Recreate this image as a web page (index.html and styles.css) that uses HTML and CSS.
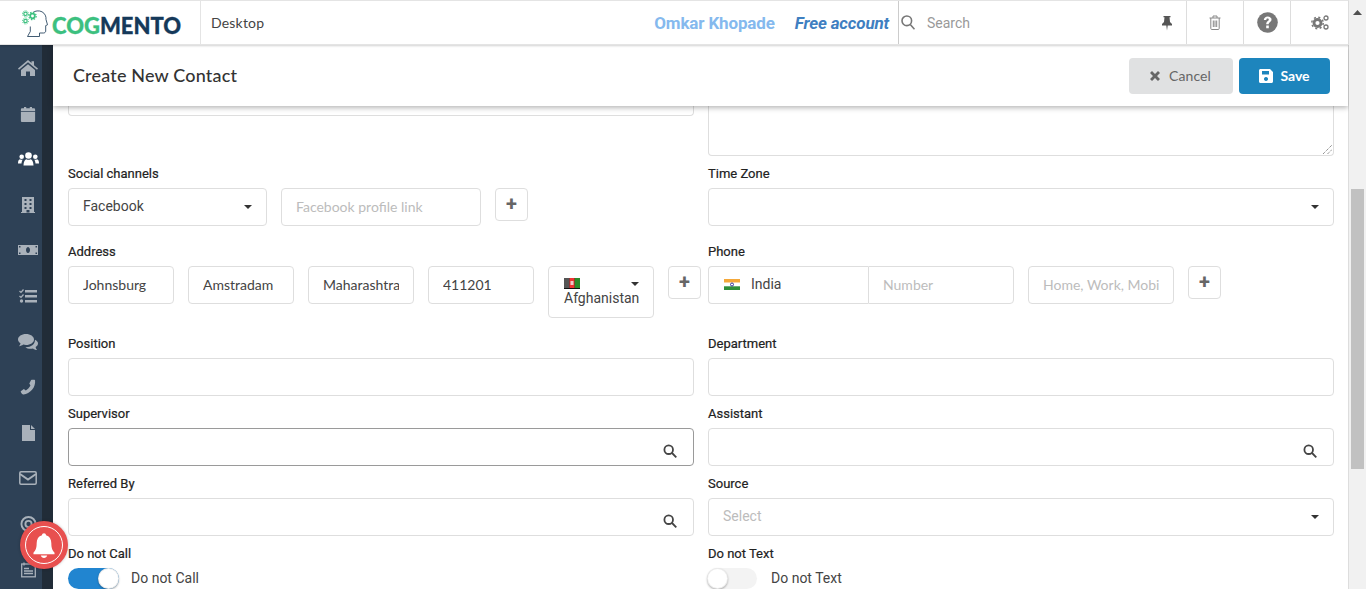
FILE: index.html
```html
<!DOCTYPE html>
<html lang="en">
<head>
<meta charset="utf-8">
<title>Create New Contact</title>
<link rel="stylesheet" href="styles.css">
</head>
<body>
<div class="page">
  <header class="topbar">
    <div class="brand">
      <svg class="brand-head" width="26" height="27" viewBox="0 0 26 27" fill="none"><path d="M11 2.500C13 .8 17 .2 20 1.800c3 1.600 4.300 4.700 4 7.700l1.500 5.300-1.800.8v5.400c0 1.200-1 2-2.200 2h-4v3.500H5.500l2.800-5v-5" stroke="#2d4a63" stroke-width=".9"/><circle cx="10.500" cy="6" r="2.300" stroke="#3cc07f" stroke-width="1.700"/><circle cx="10.500" cy="6" r="3.700" stroke="#3cc07f" stroke-width="1.200" stroke-dasharray="1.500 1.400"/><circle cx="3.500" cy="3.800" r="1.700" stroke="#3cc07f" stroke-width="1.200"/><circle cx="3.500" cy="3.800" r="3" stroke="#3cc07f" stroke-width=".9" stroke-dasharray="1.200 1.100"/><circle cx="3.500" cy="11" r="1.700" stroke="#3cc07f" stroke-width="1.200"/><circle cx="3.500" cy="11" r="3" stroke="#3cc07f" stroke-width=".9" stroke-dasharray="1.200 1.100"/></svg>
      <span class="brand-name"><span class="brand-green">COG</span><span class="brand-navy">MENTO</span></span>
    </div>
    <div class="crumb">Desktop</div>
    <div class="account"><span class="account-name">Omkar Khopade</span><span class="account-plan">Free account</span></div>
    <div class="search">
      <svg width="14" height="15" viewBox="0 0 14 15" fill="none" stroke="#777" stroke-width="1.600"><circle cx="5.800" cy="5.800" r="4.800"/><path d="M9.300 9.500l4.200 4.800"/></svg>
      <span class="search-text">Search</span>
      <svg class="pin" width="12" height="16" viewBox="0 0 12 16" fill="#555"><path d="M2.500 1h7v1.300H8.500L9 7l2 2v1.500H6.700L6 15.500l-.7-5H1V9l2-2 .5-4.700h-1z"/></svg>
    </div>
    <div class="tool tool-trash"><svg width="12" height="15" viewBox="0 0 12 15" fill="none" stroke="#888"><path d="M.5 3h11M4 3V1h4v2M1.800 3v10.500c0 .6.400 1 1 1h6.400c.6 0 1-.4 1-1V3M4.300 5.500v6.500M6 5.500v6.500M7.700 5.500v6.500"/></svg></div>
    <div class="tool tool-help"><svg width="21" height="21" viewBox="0 0 21 21"><circle cx="10.500" cy="10.500" r="10.300" fill="#777"/><path d="M6.800 8c.2-2.300 1.800-3.600 3.900-3.600 2.200 0 3.800 1.300 3.800 3.200 0 2.600-2.800 2.600-2.800 4.600H9.200c0-3.100 2.600-3.100 2.600-4.500 0-.7-.5-1.200-1.200-1.200-.8 0-1.200.5-1.300 1.400zM9.200 13.500h2.600v2.700H9.200z" fill="#fff"/></svg></div>
    <div class="tool tool-gears"><svg width="18" height="15" viewBox="0 0 18 15"><circle cx="6.500" cy="8" r="3.500" fill="none" stroke="#777" stroke-width="2.800"/><circle cx="6.500" cy="8" r="5.700" fill="none" stroke="#777" stroke-width="1.500" stroke-dasharray="2 2.500"/><circle cx="15" cy="3" r="2" fill="none" stroke="#777" stroke-width="1.300"/><circle cx="15" cy="12" r="2" fill="none" stroke="#777" stroke-width="1.300"/></svg></div>
  </header>

  <div class="body-row">
    <nav class="side">
      <div class="side-icons">
        <svg width="20" height="16" viewBox="0 0 20 16"><path d="M10 0l3.500 3V1.200H16v4L20 8.600l-1 1.100L10 2.200 1 9.700 0 8.600z"/><path d="M3 10l7-5.800L17 10v6h-5v-4.500H8V16H3z"/></svg>
        <svg width="16" height="18" viewBox="0 0 16 18"><path d="M0 6.500h16v10c0 .8-.6 1.500-1.500 1.500h-13C.6 18 0 17.300 0 16.500zM1.500 2.500H3.500V1h2.500v1.500h4V1h2.500v1.500h2c.8 0 1.500.6 1.500 1.500v1.500H0V4c0-.9.600-1.500 1.500-1.500z"/></svg>
        <svg class="active" width="21" height="14" viewBox="0 0 21 14"><circle cx="10.500" cy="3.500" r="3.300"/><circle cx="3.700" cy="4.800" r="2.300"/><circle cx="17.300" cy="4.800" r="2.300"/><path d="M5.500 13.500c0-3.800 1.500-6 3-6.300.9.700 3.100.7 4 0 1.500.3 3 2.500 3 6.300zM0 11.500c0-2.500.6-4 2-4.200.8.600 2 .6 2.800.3-.7 1-1.200 2.200-1.300 3.900zM21 11.500c0-2.500-.6-4-2-4.200-.8.600-2 .6-2.800.3.700 1 1.200 2.200 1.300 3.900z"/></svg>
        <svg width="14" height="16" viewBox="0 0 14 16"><path fill-rule="evenodd" d="M1 0h12v15h1v1H0v-1h1zM3.500 2v2h2V2zm5 0v2h2V2zM3.500 6v2h2V6zm5 0v2h2V6zM3.500 10v2h2v-2zm5 0v2h2v-2zM5.500 13v2.500h3V13z"/></svg>
        <svg width="20" height="10" viewBox="0 0 20 10"><path fill-rule="evenodd" d="M0 0h20v10H0zM10 2a2 3 0 1 0 .01 0zM1 1v1.500h1.500V1zm16.500 0v1.500H19V1zM1 7.500V9h1.500V7.500zm16.500 0V9H19V7.500z"/></svg>
        <svg width="18" height="14" viewBox="0 0 18 14"><path d="M6 1h12v2.400H6zM6 6h12v2.400H6zM6 11h12v2.400H6z"/><circle cx="2.500" cy="12" r="1.700"/><path class="line-art" d="M.5 2l1.500 1.400L4.500.5M.5 7l1.500 1.400 2.500-2.900"/></svg>
        <svg width="20" height="16" viewBox="0 0 20 16"><path d="M8 0c4.400 0 8 2.400 8 5.500S12.400 11 8 11c-1 0-2-.1-2.800-.4C4 11.600 2.600 12 1 12.200c.9-1 1.400-2 1.500-3C.9 8.200 0 6.900 0 5.500 0 2.400 3.600 0 8 0z"/><path d="M17 5.800c1.900.9 3 2.200 3 3.700 0 1.400-.9 2.600-2.400 3.500.1 1 .6 2 1.400 3-1.500-.2-2.900-.6-4-1.600-.8.200-1.600.3-2.500.3-2 0-3.900-.5-5.100-1.500 5.100.3 9.500-2.500 9.600-7.400z"/></svg>
        <svg width="16" height="17" viewBox="0 0 16 17"><path d="M15.500 1.200c.4 3.600-.7 7.300-3.200 10.200-2.500 2.900-5.600 4.800-9 5.100-.5 0-1.400-.5-2-1.200-.7-.9-1.100-1.800-1-2.300l3.300-2.300 2.100 1.500c1.800-.9 3.700-3 4.900-5.200L9.400 4.700 11.300 1.100c.6-.2 1.600-.3 2.500-.2.700 0 1.500.1 1.700.3z"/></svg>
        <svg width="13" height="16" viewBox="0 0 13 16"><path d="M0 0h8v5h5v11H0zM9 0l4 4H9z"/></svg>
        <svg class="outline" width="18" height="14" viewBox="0 0 18 14"><rect x=".8" y=".8" width="16.400" height="12.400" rx="1.200" stroke-width="1.500"/><path d="M1 3l8 5.500L17 3" stroke-width="2"/></svg>
        <svg class="outline" width="17" height="17" viewBox="0 0 17 17" stroke-width="2"><circle cx="8.500" cy="8.500" r="7.500"/><circle cx="8.500" cy="8.500" r="3.300"/></svg>
        <svg class="outline" width="15" height="15" viewBox="0 0 15 15" stroke-width="1.300"><rect x=".7" y="1.500" width="13.600" height="12.800"/><path d="M3 0v3M12 0v3M3 6h5M3 8.500h9M3 11h9"/></svg>
      </div>
      <div class="side-strip"></div>
    </nav>

    <main class="content">
      <div class="titlebar">
        <h1 class="title">Create New Contact</h1>
        <div class="actions">
          <button class="btn btn-cancel"><svg width="10" height="10" viewBox="0 0 10 10"><path d="M2 0l3 3 3-3 2 2-3 3 3 3-2 2-3-3-3 3-2-2 3-3-3-3z" fill="#666"/></svg>Cancel</button>
          <button class="btn btn-save"><svg width="14" height="14" viewBox="0 0 14 14"><path fill-rule="evenodd" d="M1.500 0H11l3 3v9.500c0 .8-.7 1.500-1.500 1.500h-11C.7 14 0 13.300 0 12.500v-11C0 .7.700 0 1.500 0zM3 2v3.500h7V2zm4 6a2 2 0 1 0 .01 0z" fill="#fff"/></svg>Save</button>
        </div>
      </div>

      <div class="form">
        <div class="grid row-clip">
          <div class="box clip-short"></div>
          <div class="box clip-tall"><svg class="resize" width="11" height="11" viewBox="0 0 11 11" fill="none" stroke="#666"><path d="M1 10L10 1M5.500 10L10 5.500" stroke-dasharray="1 1"/></svg></div>
        </div>

        <div class="grid row-wide">
          <div>
            <label class="label">Social channels</label>
            <div class="line">
              <div class="box field select w-199"><span class="val">Facebook</span><i class="caret"></i></div>
              <div class="box field placeholder w-200"><span class="val text-input">Facebook profile link</span></div>
              <div class="box plus">+</div>
            </div>
          </div>
          <div>
            <label class="label">Time Zone</label>
            <div class="box field select"><i class="caret"></i></div>
          </div>
        </div>

        <div class="grid row-wide">
          <div>
            <label class="label">Address</label>
            <div class="line">
              <div class="box field w-106"><span class="val text-input">Johnsburg</span></div>
              <div class="box field w-106"><span class="val text-input">Amstradam</span></div>
              <div class="box field w-106"><span class="val text-input">Maharashtra</span></div>
              <div class="box field w-106"><span class="val text-input">411201</span></div>
              <div class="box country">
                <svg class="flag" width="16" height="11" viewBox="0 0 16 11"><rect width="16" height="11" fill="#111"/><rect x="5.300" width="5.400" height="11" fill="#e33"/><rect x="10.700" width="5.300" height="11" fill="#2a8a2a"/><rect x="0" width="5.300" height="11" fill="#555"/><rect x="6.500" y="3" width="3" height="4" fill="#eee" opacity=".8"/><rect y="10" width="16" height="1" fill="#111"/></svg>
                <span>Afghanistan</span><i class="caret"></i>
              </div>
              <div class="box plus">+</div>
            </div>
          </div>
          <div>
            <label class="label">Phone</label>
            <div class="line">
              <div class="phone-group">
                <div class="box phone-country">
                  <svg width="16" height="11" viewBox="0 0 16 11"><rect width="16" height="3.700" fill="#f4a83a"/><rect y="3.700" width="16" height="3.600" fill="#fff"/><rect y="7.300" width="16" height="3.700" fill="#2f8f3a"/><circle cx="8" cy="5.500" r="1.500" fill="none" stroke="#339"/></svg>
                  India
                </div>
                <div class="box field placeholder phone-number"><span class="val text-input">Number</span></div>
              </div>
              <div class="box field placeholder w-146"><span class="val text-input">Home, Work, Mobile</span></div>
              <div class="box plus">+</div>
            </div>
          </div>
        </div>

        <div class="grid row-tight">
          <div><label class="label">Position</label><div class="box field"></div></div>
          <div><label class="label">Department</label><div class="box field"></div></div>
        </div>

        <div class="grid row-tight">
          <div><label class="label">Supervisor</label><div class="box field focus select"><svg class="lens" width="14" height="14" viewBox="0 0 14 14" fill="none" stroke="#444" stroke-width="1.800"><circle cx="5.700" cy="5.700" r="4.300"/><path d="M9 9l4.300 4.300"/></svg></div></div>
          <div><label class="label">Assistant</label><div class="box field select"><svg class="lens" width="14" height="14" viewBox="0 0 14 14" fill="none" stroke="#444" stroke-width="1.800"><circle cx="5.700" cy="5.700" r="4.300"/><path d="M9 9l4.300 4.300"/></svg></div></div>
        </div>

        <div class="grid row-tight">
          <div><label class="label">Referred By</label><div class="box field select"><svg class="lens" width="14" height="14" viewBox="0 0 14 14" fill="none" stroke="#444" stroke-width="1.800"><circle cx="5.700" cy="5.700" r="4.300"/><path d="M9 9l4.300 4.300"/></svg></div></div>
          <div><label class="label">Source</label><div class="box field select placeholder"><span class="val">Select</span><i class="caret"></i></div></div>
        </div>

        <div class="grid row-tight">
          <div><label class="label">Do not Call</label><div class="toggle-line"><span class="toggle on"></span>Do not Call</div></div>
          <div><label class="label">Do not Text</label><div class="toggle-line"><span class="toggle"></span>Do not Text</div></div>
        </div>
      </div>
    </main>

    <aside class="scrollbar">
      <svg class="arrow" width="9" height="5" viewBox="0 0 9 5"><path d="M4.500 0L9 5H0z" fill="#505050"/></svg>
      <div class="thumb"></div>
    </aside>
  </div>

  <div class="bell"><div class="bell-ring"><svg width="24" height="27" viewBox="0 0 24 27" fill="#fff"><path d="M12 0c1.300 0 2.200 1 2.200 2.300C18 3.400 20 6.500 20 11c0 5.500 1.200 7.700 3.500 10.300V23H.5v-1.700C2.800 18.700 4 16.500 4 11c0-4.500 2-7.600 5.800-8.700C9.800 1 10.700 0 12 0z"/><path d="M8.500 24.300h7C15 26 13.700 27 12 27s-3-1-3.500-2.700z"/></svg></div></div>
</div>
</body>
</html>
```

FILE: styles.css
```css
* { box-sizing: border-box; }
html, body { margin: 0; height: 100%; overflow: hidden; }
body { font-family: "Roboto", sans-serif; font-size: 14px; color: #333; background: #fff; }
.page { position: relative; display: flex; flex-direction: column; height: 589px; width: 1366px; }

.topbar { display: flex; align-items: stretch; height: 45px; width: 1349px; border: 1px solid #e4e4e4; border-left: 0; border-right: 1px solid #ddd; background: #fff; box-shadow: 0 1px 2px rgba(0,0,0,.18); position: relative; z-index: 3; }
.brand { width: 201px; display: flex; align-items: center; padding-left: 22px; border-right: 1px solid #e4e4e4; }
.brand-head { flex: none; margin-top: 1px; }
.brand-name { font-family: "Lato", sans-serif; font-weight: 900; font-size: 22px; margin-left: 4px; margin-top: 5px; -webkit-text-stroke: .3px; }
.brand-green { color: #3cc07f; }
.brand-navy { color: #15395a; }
.crumb { width: 150px; padding-left: 10px; font-family: "Lato", sans-serif; font-size: 14px; line-height: 44px; color: #444; letter-spacing: .2px; }
.account { flex: 1; display: flex; justify-content: flex-end; align-items: center; gap: 20px; padding-right: 9px; font-weight: 700; font-size: 17px; letter-spacing: -.15px; }
.account-name { color: #85b9ee; }
.account-plan { color: #3f7fc1; font-style: italic; }
.search { width: 288px; display: flex; align-items: center; padding-left: 2px; border-left: 1px solid #ccc; color: #999; font-size: 14px; }
.search-text { margin-left: 12px; flex: 1; }
.pin { margin-right: 13px; }
.tool { display: flex; align-items: center; justify-content: center; border-left: 1px solid #ddd; }
.tool-trash { width: 57px; }
.tool-help { width: 47px; }
.tool-gears { width: 58px; }

.body-row { flex: 1; display: flex; min-height: 0; }
.side { width: 53px; flex: none; display: flex; background: #2e4156; }
.side-icons { width: 42px; padding: 15px 0 0 14px; display: flex; flex-direction: column; align-items: center; color: #a9b1ba; }
.side-icons svg { fill: currentColor; height: 16px; margin-bottom: 29.600px; flex: none; overflow: visible; }
.side-icons svg.active { color: #fff; }
.side-icons svg.outline { fill: none; stroke: currentColor; }
.side-icons .line-art { fill: none; stroke: currentColor; stroke-width: 1.300; }
.side-strip { width: 11px; background: #212c38; }

.content { flex: 1; min-width: 0; display: flex; flex-direction: column; background: #fff; border-right: 1px solid #ddd; }
.titlebar { height: 61px; flex: none; display: flex; align-items: center; justify-content: space-between; padding: 0 20px 2px 20px; background: #fff; box-shadow: 0 2px 5px rgba(0,0,0,.28); position: relative; z-index: 2; }
.title { margin: 0; font-family: "Lato", sans-serif; font-size: 18px; font-weight: 500; color: #333; letter-spacing: .17px; }
.actions { display: flex; gap: 6px; margin: 2px -2px 0 0; }
.btn { height: 36px; border: 0; border-radius: 4px; display: flex; align-items: center; justify-content: center; font-family: "Lato", sans-serif; font-size: 14px; gap: 7px; }
.btn-cancel { width: 104px; background: #e0e1e2; color: #666; gap: 9px; padding-right: 7px; letter-spacing: .1px; }
.btn-save { width: 91px; background: #1d85bd; color: #fff; font-weight: 700; }

.form { flex: 1; min-height: 0; overflow: hidden; padding: 0 15px; }
.grid { display: grid; grid-template-columns: 626px 626px; column-gap: 14px; align-items: start; }
.row-clip { height: 50px; margin-bottom: 10px; }
.row-wide { margin-bottom: 18px; }
.row-tight { margin-bottom: 10px; }
.label { display: block; height: 15px; margin-bottom: 7px; font-size: 13px; line-height: 15px; font-weight: 400; color: #222; -webkit-text-stroke: .2px #222; }
.box { border: 1px solid #dedede; border-radius: 4px; background: #fff; }
.clip-short { height: 10px; border-top: 0; border-radius: 0 0 4px 4px; }
.clip-tall { height: 50px; border-top: 0; border-radius: 0 0 4px 4px; position: relative; }
.resize { position: absolute; right: 0; bottom: 0; }
.line { display: flex; gap: 14px; align-items: flex-start; }
.field { height: 38px; position: relative; padding: 0 14px; line-height: 36px; font-size: 14px; color: #444; white-space: nowrap; flex: none; }
.val { display: block; overflow: hidden; }
.text-input { font-family: "Lato", sans-serif; }
.select .val { line-height: 34px; }
.placeholder { color: #bcbcbc; }
.focus { border-color: #9a9a9a; }
.w-199 { width: 199px; }
.w-200 { width: 200px; }
.w-106 { width: 106px; }
.w-146 { width: 146px; }
.caret { position: absolute; right: 14px; top: 16px; width: 0; height: 0; border: 4px solid transparent; border-top: 4px solid #333; border-bottom: 0; }
.plus { width: 33px; height: 33px; flex: none; display: flex; align-items: center; justify-content: center; padding-bottom: 2px; font-size: 20px; line-height: 1; font-weight: 700; color: #666; }
.country { width: 106px; height: 52px; flex: none; position: relative; padding: 11px 14px 0 15px; font-size: 14px; color: #444; line-height: 17px; }
.country .flag { display: block; margin-bottom: 1px; }
.country .caret { top: 15px; right: 14px; }
.phone-group { display: flex; flex: none; }
.phone-country { width: 160px; height: 38px; flex: none; display: flex; align-items: center; gap: 11px; padding: 0 0 2px 15px; color: #444; font-size: 14px; border-radius: 4px 0 0 4px; border-right: 0; }
.phone-number { width: 146px; border-radius: 0 4px 4px 0; }
.lens { position: absolute; right: 16px; top: 15px; }
.toggle-line { display: flex; align-items: center; gap: 12px; font-size: 14px; color: #444; height: 20px; }
.toggle { position: relative; width: 50px; height: 21px; margin-left: -1px; margin-right: 2px; border-radius: 11px; background: #f3f3f3; flex: none; }
.toggle::after { content: ""; position: absolute; left: 0; top: 0; width: 21px; height: 21px; border-radius: 50%; background: #fff; box-shadow: 0 1px 2px rgba(0,0,0,.3), inset 0 0 0 1px rgba(0,0,0,.08); }
.toggle.on { width: 51px; margin: 0; background: #2185d0; }
.toggle.on::after { left: 30px; }

.scrollbar { width: 17px; flex: none; background: #f1f1f1; position: relative; margin-top: -45px; z-index: 4; }
.arrow { display: block; margin: 10px 0 0 4px; }
.thumb { position: absolute; left: 2px; width: 13px; top: 189px; height: 280px; background: #c1c1c1; }

.bell { position: absolute; left: 20px; top: 521px; width: 48px; height: 48px; border-radius: 50%; background: #e8504f; display: flex; align-items: center; justify-content: center; box-shadow: 0 0 3px rgba(0,0,0,.25); z-index: 5; }
.bell-ring { width: 38px; height: 38px; border: 1.500px solid #fff; border-radius: 50%; display: flex; align-items: center; justify-content: center; }
.bell-ring svg { width: 22px; height: 25px; }
```
